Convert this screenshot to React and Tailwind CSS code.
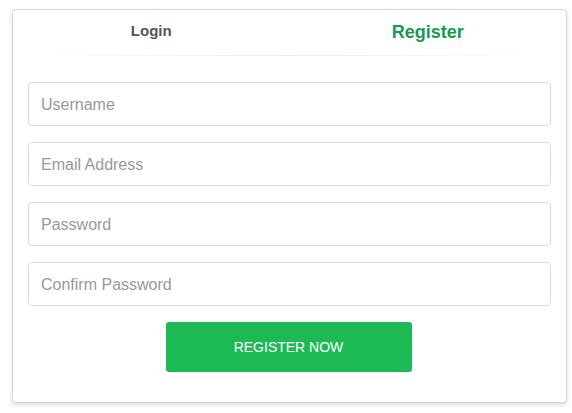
import { useState } from 'react';

const fields = ['Username', 'Email Address', 'Password', 'Confirm Password'];

export default function App() {
  const [tab, setTab] = useState('register');

  return (
    <div className="w-[572px] h-[413px] bg-white pt-[9px] pl-[12px]" style={{ fontFamily: '"Liberation Sans", Arial, sans-serif' }}>
      <div className="w-[555px] h-[394px] bg-white border border-[#d9d9d9] rounded-[4px] shadow-[0_2px_4px_rgba(0,0,0,0.15)]">
        <div className="grid grid-cols-2 h-[45px]">
          <button
            onClick={() => setTab('login')}
            className="flex items-center justify-center pb-[2px] text-[15px] font-bold text-[#555]"
          >
            Login
          </button>
          <button
            onClick={() => setTab('register')}
            className="flex items-center justify-center text-[18px] font-bold text-[#149b50]"
          >
            Register
          </button>
        </div>
        <div className="mx-[18px] h-[1px] bg-gradient-to-r from-transparent via-[#ececec] to-transparent" />

        <form className="px-[15px] pt-[26px] flex flex-col gap-[16px]" onSubmit={(e) => e.preventDefault()}>
          {fields.map((f) => (
            <input
              key={f}
              type={f.includes('Password') ? 'password' : 'text'}
              placeholder={f}
              className="h-[44px] w-full rounded-[4px] border border-[#dcdcdc] px-[12px] pt-[2px] text-[16px] text-[#333] placeholder:text-[#999] outline-none"
            />
          ))}
          <div className="flex justify-center">
            <button
              type="submit"
              className="w-[246px] h-[50px] mr-[2px] rounded-[3px] bg-[#1db954] text-white text-[14px]"
            >
              REGISTER NOW
            </button>
          </div>
        </form>
      </div>
    </div>
  );
}
